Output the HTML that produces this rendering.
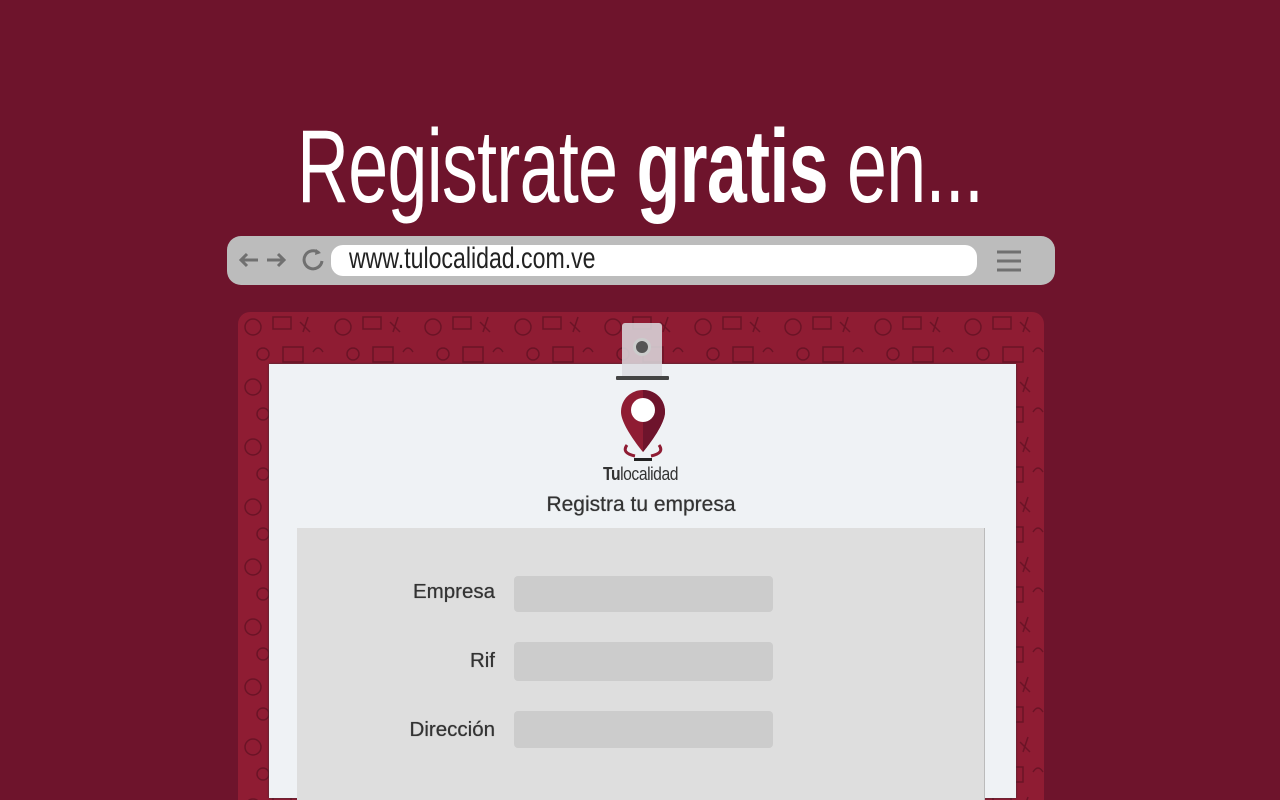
<!DOCTYPE html>
<html><head><meta charset="utf-8"><style>
*{margin:0;padding:0;box-sizing:border-box}
html,body{width:1280px;height:800px;overflow:hidden}
body{background:#6e142c;font-family:"Liberation Sans",sans-serif;position:relative}
.title{position:absolute;left:0;width:1280px;top:112px;text-align:center;color:#fff;font-size:104px;line-height:110px;white-space:nowrap}
.title span.in{display:inline-block;transform:scaleX(0.69);transform-origin:center;font-weight:300;letter-spacing:-1px}
.bar{position:absolute;left:227px;top:236px;width:828px;height:49px;background:#bcbcbc;border-radius:14px}
.url{position:absolute;left:331px;top:245px;width:646px;height:31px;background:#fff;border-radius:12px}
.urltext{position:absolute;left:349px;top:242px;font-size:30px;color:#222;white-space:nowrap;transform:scaleX(0.77);transform-origin:left}
.panel{position:absolute;left:238px;top:312px;width:806px;height:488px;background:#8f1c33;border-radius:12px 12px 0 0;overflow:hidden}
.paper{position:absolute;left:269px;top:364px;width:747px;height:434px;background:#eff2f5;box-shadow:0 0 2px #333}
.form{position:absolute;left:297px;top:528px;width:688px;height:272px;background:#dedede;border-right:1px solid #bbb}
.lbl{position:absolute;right:785px;font-size:20.5px;color:#333;text-align:right;text-shadow:0 0 .6px #333}
.inp{position:absolute;left:514px;width:259px;background:#cccccc;border-radius:4px}
.clip{position:absolute;left:622px;top:323px;width:40px;height:56px;background:rgba(220,220,225,.85);border-radius:3px}
</style></head><body>
<div class="title"><span class="in">Registrate <b style="font-weight:700">gratis</b> en...</span></div>
<div class="bar"></div>
<svg style="position:absolute;left:238px;top:247px" width="90" height="28" viewBox="0 0 90 28" fill="none" stroke="#707070" stroke-width="3">
<path d="M3 13h17M9 7l-6 6 6 6"/><path d="M29 13h17M40 7l6 6-6 6"/>
<path d="M81 6a9 9 0 1 0 3 8"/><path d="M78 2l5 4-6 2z" fill="#707070" stroke="none"/>
</svg>
<div class="url"></div>
<div class="urltext">www.tulocalidad.com.ve</div>
<svg style="position:absolute;left:996px;top:249px" width="26" height="24"><path d="M1 3h24M1 12h24M1 21h24" stroke="#707070" stroke-width="3"/></svg>
<div class="panel">
<svg width="806" height="500" style="opacity:.35">
<defs><pattern id="p" width="90" height="60" patternUnits="userSpaceOnUse">
<g fill="none" stroke="#2a0510" stroke-width="1.5"><circle cx="15" cy="15" r="8"/><rect x="35" y="5" width="18" height="12"/><path d="M62 10l10 10M70 5l-5 15"/><circle cx="25" cy="42" r="6"/><path d="M45 35h20v15H45z"/><path d="M75 40q5-8 10 0"/></g>
</pattern></defs><rect width="806" height="500" fill="url(#p)"/></svg>
</div>
<div class="paper"></div>
<div class="clip"></div>
<div style="position:absolute;left:616px;top:376px;width:53px;height:4px;background:#444;border-radius:1px"></div>
<div style="position:absolute;left:633px;top:338px;width:18px;height:18px;border-radius:50%;background:#555;border:3px solid #ccc"></div>
<svg style="position:absolute;left:618px;top:388px" width="50" height="75" viewBox="0 0 50 75">
<path d="M25 2C13 2 3 11 3 24c0 14 22 40 22 40s22-26 22-40C47 11 37 2 25 2z" fill="#8f1c33"/>
<path d="M25 2c12 0 22 9 22 22 0 14-22 40-22 40z" fill="#6e142c"/>
<circle cx="25" cy="22" r="12" fill="#fff"/>
<path d="M9 57q-6 8 8 11M41 57q6 8-8 11" stroke="#8f1c33" stroke-width="3" fill="none"/>
<rect x="16" y="70" width="18" height="3" fill="#222"/>
</svg>
<div style="position:absolute;left:603px;top:464px;font-size:18px;color:#333;white-space:nowrap;transform:scaleX(.87);transform-origin:left;letter-spacing:-.5px"><b>Tu</b>localidad</div>
<div style="position:absolute;left:0;width:1282px;top:493px;text-align:center;font-size:21px;color:#333;text-shadow:0 0 .6px #333">Registra tu empresa</div>
<div class="form"></div>
<div class="lbl" style="top:580px">Empresa</div>
<div class="inp" style="top:576px;height:36px"></div>
<div class="lbl" style="top:649px">Rif</div>
<div class="inp" style="top:642px;height:39px"></div>
<div class="lbl" style="top:718px">Dirección</div>
<div class="inp" style="top:711px;height:37px"></div>
</body></html>
